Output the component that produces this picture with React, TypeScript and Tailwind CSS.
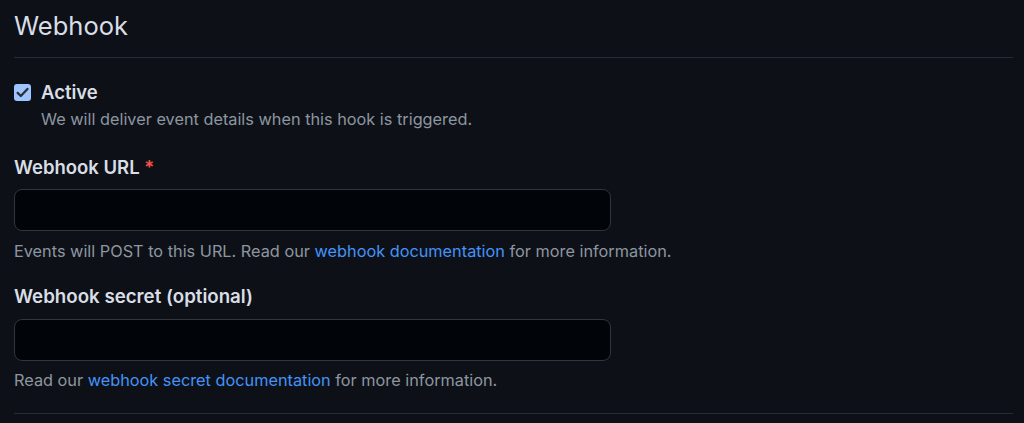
import React from "react";

export default function App() {
  return (
    <div
      className="min-h-[423px] w-[1024px] bg-[#0d1117] pl-[14px] pr-[11px]"
      style={{ fontFamily: "Inter, 'Noto Sans', 'Liberation Sans', sans-serif" }}
    >
      <div className="border-b border-[#262c36] pt-[5px] pb-[10px]">
        <h2 className="text-[25.5px] font-normal leading-[42px] text-[#d9dee6]">Webhook</h2>
      </div>

      <div className="mt-[22px] flex items-start gap-[10px]">
        <div className="mt-[4px] flex h-[17px] w-[17px] items-center justify-center rounded-[3px] bg-[#9ec5fe]">
          <svg width="15" height="15" viewBox="0 0 16 16" fill="none">
            <path d="M2.8 8.4l3.4 3.4L13.3 4.2" stroke="#2b2f36" strokeWidth="2.4" strokeLinecap="round" strokeLinejoin="round" />
          </svg>
        </div>
        <div>
          <div className="text-[18.5px] font-semibold leading-[24px] text-[#d9dee6]">Active</div>
          <div className="mt-[4px] text-[16.3px] leading-[22px] text-[#8d96a0]">
            We will deliver event details when this hook is triggered.
          </div>
        </div>
      </div>

      <div className="mt-[25px]">
        <div className="text-[18.5px] font-semibold leading-[24px] text-[#d9dee6]">
          Webhook URL <span className="text-[#f85149]">*</span>
        </div>
        <div className="mt-[10px] h-[42px] w-[597px] rounded-[8px] border border-[#30363d] bg-[#010409]" />
        <div className="mt-[9px] text-[16.3px] leading-[22px] text-[#8d96a0]">
          Events will POST to this URL. Read our{" "}
          <span className="text-[#4493f8]">webhook documentation</span> for more information.
        </div>
      </div>

      <div className="mt-[23px]">
        <div className="text-[18.7px] font-semibold leading-[24px] text-[#d9dee6]">Webhook secret (optional)</div>
        <div className="mt-[10px] h-[42px] w-[597px] rounded-[8px] border border-[#30363d] bg-[#010409]" />
        <div className="mt-[8px] text-[16.3px] leading-[22px] text-[#8d96a0]">
          Read our <span className="text-[#4493f8]">webhook secret documentation</span> for more information.
        </div>
      </div>

      <div className="mt-[22px] border-b border-[#262c36]" />
    </div>
  );
}
